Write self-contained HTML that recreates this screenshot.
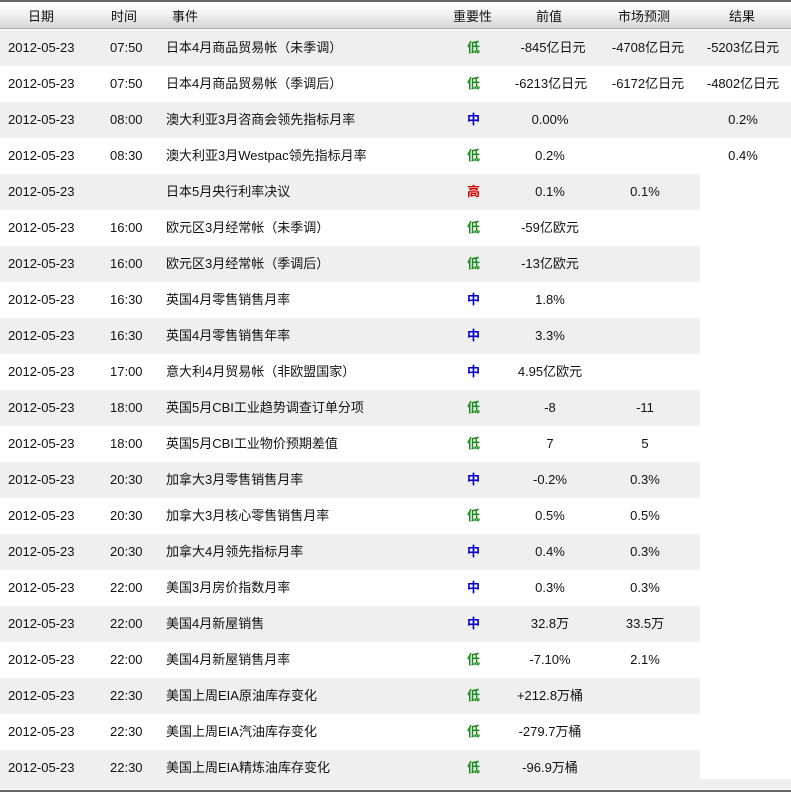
<!DOCTYPE html>
<html><head><meta charset="utf-8"><style>
body{margin:0;background:#fff;width:791px;height:802px;overflow:hidden;font-family:"Liberation Sans","Noto Sans CJK SC",sans-serif;font-size:13px;color:#111}
.hd{position:absolute;left:0;top:0;width:791px;height:29px;border-top:2px solid #666;border-bottom:1px solid #aaa;background:linear-gradient(#fff,#f4f4f4 40%,#d6d6d6);box-sizing:border-box}
.hd span{position:absolute;top:4px}
.w{position:absolute;left:0;top:-2px;width:791px;height:802px}
.r{position:absolute;left:0;width:791px;height:36px;line-height:36px}
.r span{position:absolute;top:0;white-space:nowrap}
.g{background:linear-gradient(90deg,#efefef 700px,#fff 700px)}
.gf{background:#efefef}
.c{text-align:center}
.lo{color:#1a8a1a;font-weight:bold}.mi{color:#0000cc;font-weight:bold}.hi{color:#d00000;font-weight:bold}
.bot{position:absolute;left:0;top:790px;width:791px;height:2px;background:#666}
</style></head><body>
<div class="hd">
<span style="left:28px">日期</span><span style="left:111px">时间</span><span style="left:172px">事件</span>
<span style="left:453px">重要性</span><span style="left:536px">前值</span><span style="left:618px">市场预测</span><span style="left:729px">结果</span>
</div>
<div class="w">
<div class="r gf" style="top:32px"><span style="left:8px">2012-05-23</span><span style="left:110px">07:50</span><span style="left:166px">日本4月商品贸易帐（未季调）</span><span class="lo" style="left:467px">低</span><span class="c" style="left:508px;width:90px">-845亿日元</span><span class="c" style="left:598px;width:100px">-4708亿日元</span><span class="c" style="left:700px;width:86px">-5203亿日元</span></div>
<div class="r" style="top:68px"><span style="left:8px">2012-05-23</span><span style="left:110px">07:50</span><span style="left:166px">日本4月商品贸易帐（季调后）</span><span class="lo" style="left:467px">低</span><span class="c" style="left:506px;width:90px">-6213亿日元</span><span class="c" style="left:598px;width:100px">-6172亿日元</span><span class="c" style="left:700px;width:86px">-4802亿日元</span></div>
<div class="r gf" style="top:104px"><span style="left:8px">2012-05-23</span><span style="left:110px">08:00</span><span style="left:166px">澳大利亚3月咨商会领先指标月率</span><span class="mi" style="left:467px">中</span><span class="c" style="left:505px;width:90px">0.00%</span><span class="c" style="left:698px;width:90px">0.2%</span></div>
<div class="r" style="top:140px"><span style="left:8px">2012-05-23</span><span style="left:110px">08:30</span><span style="left:166px">澳大利亚3月Westpac领先指标月率</span><span class="lo" style="left:467px">低</span><span class="c" style="left:505px;width:90px">0.2%</span><span class="c" style="left:698px;width:90px">0.4%</span></div>
<div class="r g" style="top:176px"><span style="left:8px">2012-05-23</span><span style="left:166px">日本5月央行利率决议</span><span class="hi" style="left:467px">高</span><span class="c" style="left:505px;width:90px">0.1%</span><span class="c" style="left:600px;width:90px">0.1%</span></div>
<div class="r" style="top:212px"><span style="left:8px">2012-05-23</span><span style="left:110px">16:00</span><span style="left:166px">欧元区3月经常帐（未季调）</span><span class="lo" style="left:467px">低</span><span class="c" style="left:505px;width:90px">-59亿欧元</span></div>
<div class="r g" style="top:248px"><span style="left:8px">2012-05-23</span><span style="left:110px">16:00</span><span style="left:166px">欧元区3月经常帐（季调后）</span><span class="lo" style="left:467px">低</span><span class="c" style="left:505px;width:90px">-13亿欧元</span></div>
<div class="r" style="top:284px"><span style="left:8px">2012-05-23</span><span style="left:110px">16:30</span><span style="left:166px">英国4月零售销售月率</span><span class="mi" style="left:467px">中</span><span class="c" style="left:505px;width:90px">1.8%</span></div>
<div class="r g" style="top:320px"><span style="left:8px">2012-05-23</span><span style="left:110px">16:30</span><span style="left:166px">英国4月零售销售年率</span><span class="mi" style="left:467px">中</span><span class="c" style="left:505px;width:90px">3.3%</span></div>
<div class="r" style="top:356px"><span style="left:8px">2012-05-23</span><span style="left:110px">17:00</span><span style="left:166px">意大利4月贸易帐（非欧盟国家）</span><span class="mi" style="left:467px">中</span><span class="c" style="left:505px;width:90px">4.95亿欧元</span></div>
<div class="r g" style="top:392px"><span style="left:8px">2012-05-23</span><span style="left:110px">18:00</span><span style="left:166px">英国5月CBI工业趋势调查订单分项</span><span class="lo" style="left:467px">低</span><span class="c" style="left:505px;width:90px">-8</span><span class="c" style="left:600px;width:90px">-11</span></div>
<div class="r" style="top:428px"><span style="left:8px">2012-05-23</span><span style="left:110px">18:00</span><span style="left:166px">英国5月CBI工业物价预期差值</span><span class="lo" style="left:467px">低</span><span class="c" style="left:505px;width:90px">7</span><span class="c" style="left:600px;width:90px">5</span></div>
<div class="r g" style="top:464px"><span style="left:8px">2012-05-23</span><span style="left:110px">20:30</span><span style="left:166px">加拿大3月零售销售月率</span><span class="mi" style="left:467px">中</span><span class="c" style="left:505px;width:90px">-0.2%</span><span class="c" style="left:600px;width:90px">0.3%</span></div>
<div class="r" style="top:500px"><span style="left:8px">2012-05-23</span><span style="left:110px">20:30</span><span style="left:166px">加拿大3月核心零售销售月率</span><span class="lo" style="left:467px">低</span><span class="c" style="left:505px;width:90px">0.5%</span><span class="c" style="left:600px;width:90px">0.5%</span></div>
<div class="r g" style="top:536px"><span style="left:8px">2012-05-23</span><span style="left:110px">20:30</span><span style="left:166px">加拿大4月领先指标月率</span><span class="mi" style="left:467px">中</span><span class="c" style="left:505px;width:90px">0.4%</span><span class="c" style="left:600px;width:90px">0.3%</span></div>
<div class="r" style="top:572px"><span style="left:8px">2012-05-23</span><span style="left:110px">22:00</span><span style="left:166px">美国3月房价指数月率</span><span class="mi" style="left:467px">中</span><span class="c" style="left:505px;width:90px">0.3%</span><span class="c" style="left:600px;width:90px">0.3%</span></div>
<div class="r g" style="top:608px"><span style="left:8px">2012-05-23</span><span style="left:110px">22:00</span><span style="left:166px">美国4月新屋销售</span><span class="mi" style="left:467px">中</span><span class="c" style="left:505px;width:90px">32.8万</span><span class="c" style="left:600px;width:90px">33.5万</span></div>
<div class="r" style="top:644px"><span style="left:8px">2012-05-23</span><span style="left:110px">22:00</span><span style="left:166px">美国4月新屋销售月率</span><span class="lo" style="left:467px">低</span><span class="c" style="left:505px;width:90px">-7.10%</span><span class="c" style="left:600px;width:90px">2.1%</span></div>
<div class="r g" style="top:680px"><span style="left:8px">2012-05-23</span><span style="left:110px">22:30</span><span style="left:166px">美国上周EIA原油库存变化</span><span class="lo" style="left:467px">低</span><span class="c" style="left:505px;width:90px">+212.8万桶</span></div>
<div class="r" style="top:716px"><span style="left:8px">2012-05-23</span><span style="left:110px">22:30</span><span style="left:166px">美国上周EIA汽油库存变化</span><span class="lo" style="left:467px">低</span><span class="c" style="left:505px;width:90px">-279.7万桶</span></div>
<div class="r g" style="top:752px"><span style="left:8px">2012-05-23</span><span style="left:110px">22:30</span><span style="left:166px">美国上周EIA精炼油库存变化</span><span class="lo" style="left:467px">低</span><span class="c" style="left:505px;width:90px">-96.9万桶</span></div>
</div>
<div class="r gf" style="top:779px;height:10px;background:#efefef"></div>
<div class="bot"></div>
</body></html>
